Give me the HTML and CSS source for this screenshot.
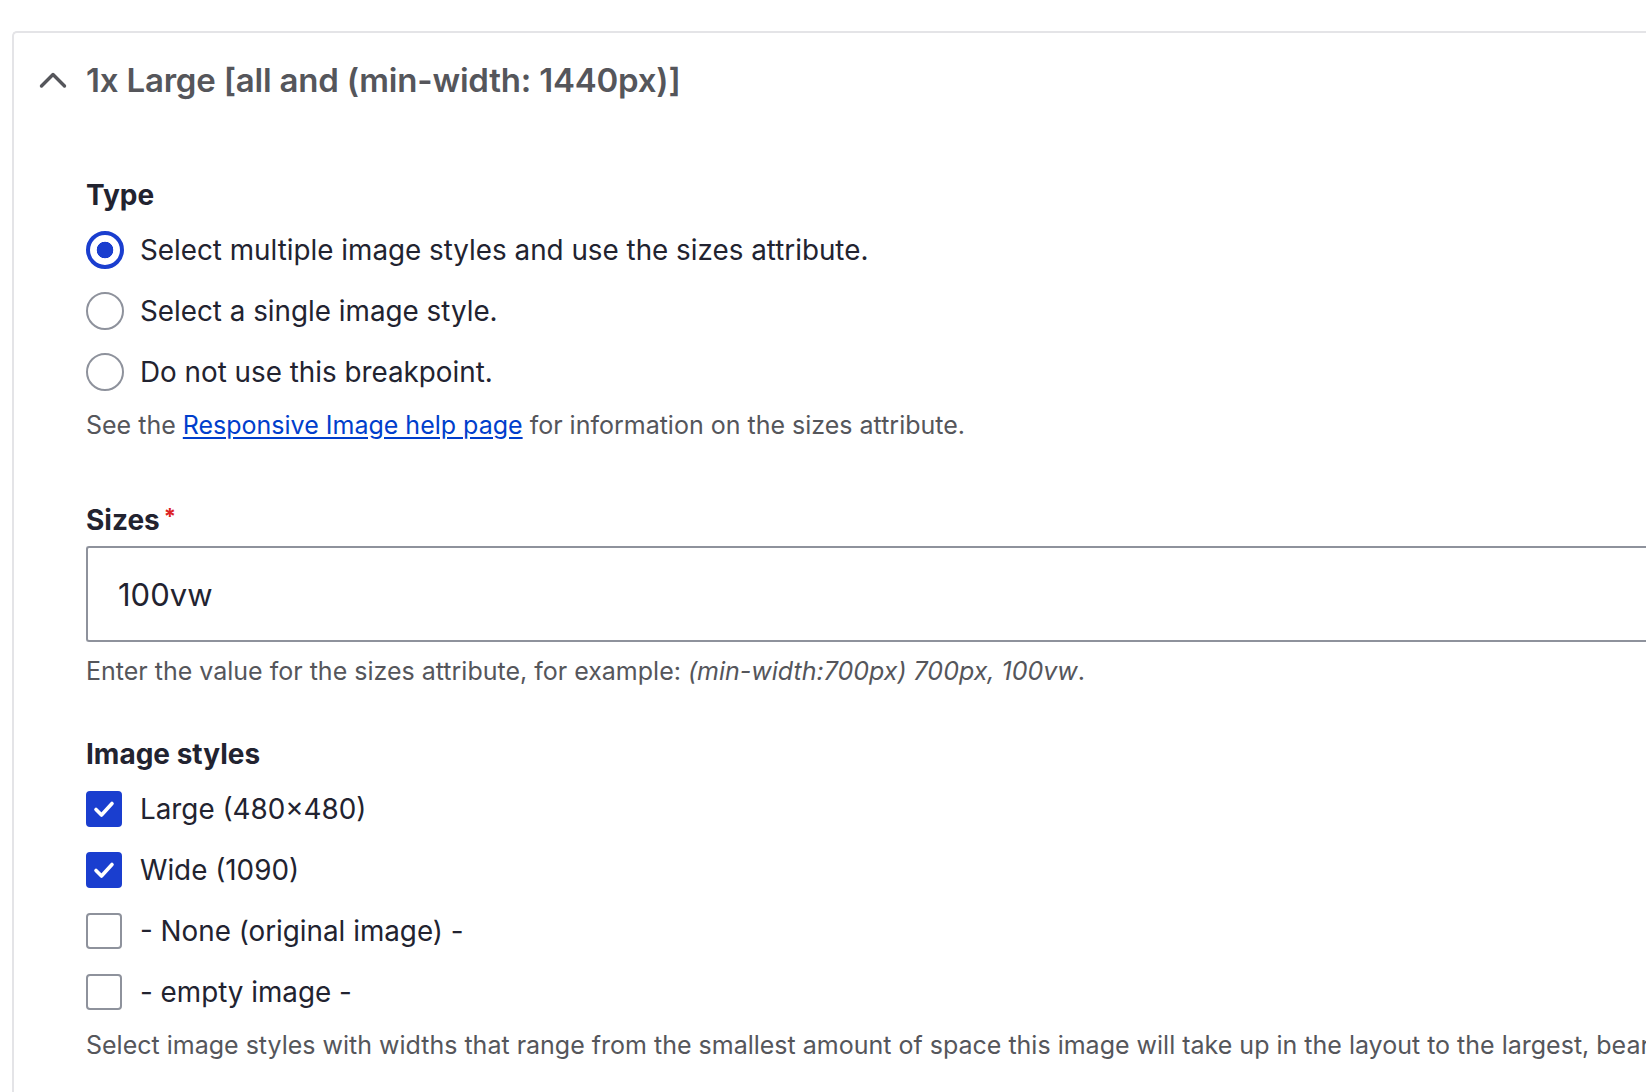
FILE: index.html
```html
<!DOCTYPE html>
<html>
<head>
<meta charset="utf-8">
<link rel="stylesheet" href="styles.css">
</head>
<body>
<div class="card">
  <div class="summary">
    <svg class="chev" width="30" height="20" viewBox="0 0 30 20"><path d="M3.5 16 L15 4.5 L26.5 16" fill="none" stroke="#55565b" stroke-width="3.4" stroke-linecap="round" stroke-linejoin="round"/></svg>
    <span class="summary-text">1x Large [all and (min-width: 1440px)]</span>
  </div>
  <div class="body">
    <div class="group">
      <div class="label">Type</div>
      <div class="options">
        <div class="option"><span class="radio checked"></span><span>Select multiple image styles and use the sizes attribute.</span></div>
        <div class="option"><span class="radio"></span><span>Select a single image style.</span></div>
        <div class="option"><span class="radio"></span><span>Do not use this breakpoint.</span></div>
      </div>
      <div class="desc">See the <a href="#">Responsive Image help page</a> for information on the sizes attribute.</div>
    </div>
    <div class="group g2">
      <div class="label">Sizes<span class="req">*</span></div>
      <div class="input">100vw</div>
      <div class="desc">Enter the value for the sizes attribute, for example: <em>(min-width:700px) 700px, 100vw</em>.</div>
    </div>
    <div class="group g3">
      <div class="label">Image styles</div>
      <div class="options">
        <div class="option"><span class="check checked"><svg width="24" height="20" viewBox="0 0 24 20"><path d="M4 10.5 L9.5 16 L20 4.5" fill="none" stroke="#fff" stroke-width="3.6" stroke-linecap="round" stroke-linejoin="round"/></svg></span><span>Large (480×480)</span></div>
        <div class="option"><span class="check checked"><svg width="24" height="20" viewBox="0 0 24 20"><path d="M4 10.5 L9.5 16 L20 4.5" fill="none" stroke="#fff" stroke-width="3.6" stroke-linecap="round" stroke-linejoin="round"/></svg></span><span>Wide (1090)</span></div>
        <div class="option"><span class="check"></span><span>- None (original image) -</span></div>
        <div class="option"><span class="check"></span><span>- empty image -</span></div>
      </div>
      <div class="desc clip">Select image styles with widths that range from the smallest amount of space this image will take up in the layout to the largest, bearing in mind that high resolution screens will need images 1.5x to 2x larger.</div>
    </div>
  </div>
</div>
</body>
</html>
```
FILE: styles.css
```css
html, body {
  margin: 0;
  padding: 0;
  background: #fff;
  overflow: hidden;
}
body {
  font-family: Inter, "Noto Sans", sans-serif;
  color: #222330;
  width: 1646px;
  height: 1092px;
}
.card {
  margin: 31px 0 0 12px;
  border: 2px solid #e4e4e7;
  border-right: none;
  border-bottom: none;
  border-top-left-radius: 5px;
  height: 1100px;
}
.summary {
  display: flex;
  align-items: center;
  height: 94px;
  padding-left: 24px;
  box-sizing: border-box;
}
.chev {
  display: block;
  margin-right: 18px;
}
.summary-text {
  font-size: 33px;
  font-weight: 600;
  color: #55565b;
  letter-spacing: -0.2px;
}
.body {
  padding-left: 72px;
  padding-top: 50px;
}
.label {
  font-size: 28px;
  font-weight: 700;
  line-height: 36px;
  color: #222330;
}
.req {
  color: #dc2323;
  font-size: 22px;
  vertical-align: top;
  margin-left: 4px;
  position: relative;
  top: -4px;
}
.options {
  display: flex;
  flex-direction: column;
  margin-top: 6px;
}
.option {
  display: flex;
  align-items: center;
  height: 61px;
  font-size: 27.8px;
  color: #222330;
}
.radio {
  width: 38px;
  height: 38px;
  box-sizing: border-box;
  border: 2px solid #8e929c;
  border-radius: 50%;
  margin-right: 16px;
  flex: none;
}
.radio.checked {
  border: 4px solid #1a3ecf;
  background: radial-gradient(circle, #1a3ecf 0 8px, #fff 8.6px);
}
.check {
  width: 36px;
  height: 36px;
  box-sizing: border-box;
  border: 2px solid #8e929c;
  border-radius: 4px;
  margin-right: 18px;
  flex: none;
  display: flex;
  align-items: center;
  justify-content: center;
}
.check.checked {
  background: #1a3ecf;
  border-color: #1a3ecf;
}
.check svg { display: block; }
.desc {
  font-size: 25px;
  color: #55565b;
  margin-top: 6px;
  line-height: 34px;
}
.desc a {
  color: #003ecc;
  text-underline-offset: 3px;
}
.clip {
  white-space: nowrap;
  overflow: hidden;
}
.g2 { margin-top: 60px; }
.g3 { margin-top: 48px; }
.input {
  margin-top: 8px;
  height: 96px;
  box-sizing: border-box;
  border: 2px solid #8e929c;
  border-right: none;
  border-radius: 3px 0 0 3px;
  font-size: 31px;
  display: flex;
  align-items: center;
  padding-left: 30px;
  margin-bottom: 12px;
}
```
